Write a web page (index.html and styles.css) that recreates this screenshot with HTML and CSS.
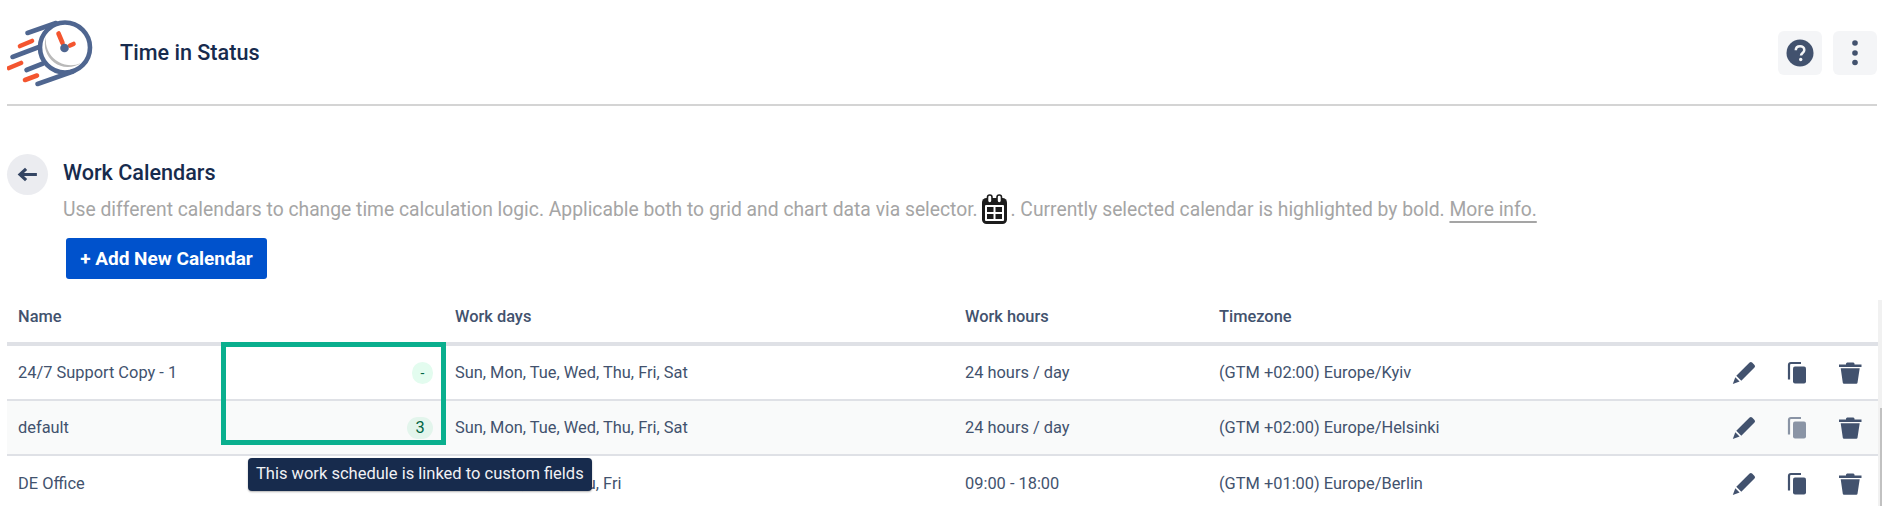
FILE: index.html
```html
<!DOCTYPE html>
<html lang="en">
<head>
<meta charset="utf-8">
<title>Time in Status</title>
<link rel="stylesheet" href="styles.css">
</head>
<body>
<header class="topbar">
  <div class="brand">
    <svg class="logo" viewBox="7 0 96 92" width="96" height="92">
      <g fill="none" stroke="#4f6690" stroke-width="4.600" stroke-linecap="round">
        <circle cx="65" cy="47.500" r="25"/>
        <path d="M27.500 33 L56 23"/>
        <path d="M12.500 57 L39 47"/>
        <path d="M26.500 70 L43 63.500"/>
        <path d="M37.500 84 L73 71.500"/>
      </g>
      <path d="M46 37 A23 23 0 0 0 81 63 A25 25 0 0 1 46 37Z" fill="#b9b9b9"/>
      <g fill="none" stroke="#f4552f" stroke-width="4.600" stroke-linecap="round">
        <path d="M20 46 L32 41"/>
        <path d="M9 68 L21 63"/>
        <path d="M25 80 L37 75.500"/>
        <path d="M58.500 33.500 L62.500 43"/>
        <path d="M70 45.500 L73.500 44"/>
      </g>
      <circle cx="64.500" cy="48" r="4.300" fill="#4f6690"/>
    </svg>
    <h1 class="app-title">Time in Status</h1>
  </div>
  <div class="top-actions">
    <button class="square-btn" aria-label="Help">
      <svg viewBox="0 0 28 28" width="28" height="28"><circle cx="14" cy="14" r="13.500" fill="#42526e"/><path d="M9.800 11.200c0-2.500 1.900-4 4.300-4s4.200 1.500 4.200 3.700c0 3-3.300 3-3.300 5.600" fill="none" stroke="#f4f5f7" stroke-width="2.500"/><circle cx="14.700" cy="20.500" r="1.700" fill="#f4f5f7"/></svg>
    </button>
    <button class="square-btn" aria-label="More">
      <svg viewBox="0 0 6 26" width="6" height="26"><circle cx="3" cy="3" r="2.800" fill="#42526e"/><circle cx="3" cy="13" r="2.800" fill="#42526e"/><circle cx="3" cy="22.500" r="2.800" fill="#42526e"/></svg>
    </button>
  </div>
</header>

<section class="intro">
  <button class="back" aria-label="Back">
    <svg viewBox="0 0 22 16" width="21" height="15"><path d="M21 8H3M9.500 2 3 8l6.500 6" fill="none" stroke="#344563" stroke-width="3.400"/></svg>
  </button>
  <div class="intro-text">
    <h2 class="page-title">Work Calendars</h2>
    <p class="desc">Use different calendars to change time calculation logic. Applicable both to grid and chart data via selector. <svg class="cal" viewBox="0 0 25 30" width="25" height="30"><rect y="4" width="25" height="26" rx="4.500" fill="#1c1c1c"/><rect x="3" y="11" width="19" height="16" rx="1" fill="#fff"/><path d="M5 13h6.500v5H5zM13.500 13H20v5h-6.500zM5 20h6.500v5H5zM13.500 20H20v5h-6.500z" fill="#1c1c1c"/><rect x="5.500" y="1" width="4.500" height="8" rx="2.200" fill="#fff" stroke="#1c1c1c" stroke-width="1.600"/><rect x="15" y="1" width="4.500" height="8" rx="2.200" fill="#fff" stroke="#1c1c1c" stroke-width="1.600"/></svg>. Currently selected calendar is highlighted by bold. <a class="more" href="#">More info.</a></p>
  </div>
</section>
<button class="add-btn">+ Add New Calendar</button>

<main class="table">
  <div class="row head">
    <div class="c-name">Name</div>
    <div class="c-link"></div>
    <div class="c-days">Work days</div>
    <div class="c-hours">Work hours</div>
    <div class="c-tz">Timezone</div>
    <div class="c-act"></div>
  </div>
  <div class="row">
    <div class="c-name">24/7 Support Copy - 1</div>
    <div class="c-link"><span class="pill">-</span></div>
    <div class="c-days">Sun, Mon, Tue, Wed, Thu, Fri, Sat</div>
    <div class="c-hours">24 hours / day</div>
    <div class="c-tz">(GTM +02:00) Europe/Kyiv</div>
    <div class="c-act">
      <svg class="ic" viewBox="0 0 24 24"><use href="#pen"/></svg>
      <svg class="ic" viewBox="0 0 24 24"><use href="#copy"/></svg>
      <svg class="ic" viewBox="0 0 24 24"><use href="#bin"/></svg>
    </div>
  </div>
  <div class="row alt">
    <div class="c-name">default</div>
    <div class="c-link"><span class="pill num">3</span></div>
    <div class="c-days">Sun, Mon, Tue, Wed, Thu, Fri, Sat</div>
    <div class="c-hours">24 hours / day</div>
    <div class="c-tz">(GTM +02:00) Europe/Helsinki</div>
    <div class="c-act">
      <svg class="ic" viewBox="0 0 24 24"><use href="#pen"/></svg>
      <svg class="ic dim" viewBox="0 0 24 24"><use href="#copy"/></svg>
      <svg class="ic" viewBox="0 0 24 24"><use href="#bin"/></svg>
    </div>
  </div>
  <div class="row last">
    <div class="c-name">DE Office</div>
    <div class="c-link"></div>
    <div class="c-days">Mon, Tue, Wed, Thu, Fri</div>
    <div class="c-hours">09:00 - 18:00</div>
    <div class="c-tz">(GTM +01:00) Europe/Berlin</div>
    <div class="c-act">
      <svg class="ic" viewBox="0 0 24 24"><use href="#pen"/></svg>
      <svg class="ic" viewBox="0 0 24 24"><use href="#copy"/></svg>
      <svg class="ic" viewBox="0 0 24 24"><use href="#bin"/></svg>
    </div>
  </div>
  <div class="highlight"></div>
  <div class="tooltip">This work schedule is linked to custom fields</div>
</main>
<div class="scroll-track"><div class="scroll-thumb"></div></div>

<svg class="defs" width="0" height="0" aria-hidden="true">
  <symbol id="pen" viewBox="0 0 24 24"><path d="M17.600 1.500a1.800 1.800 0 0 1 2.500 0l2.400 2.400a1.800 1.800 0 0 1 0 2.500L9.300 19.700l-5-5ZM3.300 16.300l4.300 4.300L.8 23Z" fill="#42526e"/></symbol>
  <symbol id="copy" viewBox="0 0 24 24"><path d="M4 18.500V4a2 2 0 0 1 2-2h10" fill="none" stroke="#42526e" stroke-width="2.200"/><rect x="8" y="5.500" width="13" height="17" rx="2" fill="#42526e"/></symbol>
  <symbol id="bin" viewBox="0 0 24 24"><path d="M1 3.500h22.500v2.500H1ZM8 2.400l1-1h6.500l1 1v1.200H8ZM2.700 7.200h19L19.500 21.800a1.200 1.200 0 0 1-1.200 1H6a1.200 1.200 0 0 1-1.200-1Z" fill="#42526e"/></symbol>
</svg>
</body>
</html>
```

FILE: styles.css
```css
* { box-sizing: border-box; }
html, body { margin: 0; height: 506px; overflow: hidden; background: #fff; }
body { font-family: Roboto, "Liberation Sans", sans-serif; color: #42526e; position: relative; }
button { border: 0; padding: 0; font-family: inherit; cursor: pointer; }

.topbar { margin: 0 5px 0 7px; height: 106px; border-bottom: 2px solid #d4d4d4; display: flex; justify-content: space-between; }
.brand { display: flex; align-items: flex-start; }
.logo { display: block; flex: none; }
.app-title { margin: 40px 0 0 17px; font-size: 21.6px; line-height: 26px; font-weight: 500; color: #172b4d; }
.top-actions { display: flex; gap: 11px; padding-top: 31px; }
.square-btn { width: 44px; height: 44px; border-radius: 6px; background: #f4f5f7; display: flex; align-items: center; justify-content: center; }

.intro { display: flex; margin: 48px 0 0 7px; }
.back { width: 41px; height: 41px; border-radius: 50%; background: #ebecf0; display: flex; align-items: center; justify-content: center; flex: none; }
.intro-text { margin-left: 15px; }
.page-title { margin: 7px 0 0; font-size: 21.6px; line-height: 24px; font-weight: 500; color: #172b4d; }
.desc { margin: 9px 0 0; font-size: 19.3px; line-height: 24px; height: 24px; color: #a5a5a5; white-space: nowrap; }
.cal { vertical-align: -8px; margin-right: 3px; }
.more { color: #a5a5a5; text-decoration: underline; text-decoration-thickness: 2px; text-underline-offset: 5px; }
.add-btn { display: block; margin: 20px 0 0 66px; width: 201px; height: 41px; border-radius: 3px; background: #0052cc; color: #fff; font-size: 19px; font-weight: 700; }

.table { position: relative; margin-left: 7px; width: 1871px; }
.row { display: grid; grid-template-columns: 215px 233px 510px 254px 1fr 180px; align-items: center; height: 55px; border-bottom: 2px solid #dfe1e6; font-size: 16.4px; line-height: 20px; }
.row > div:first-child { padding-left: 11px; }
.row.head { height: 67px; padding-top: 13px; border-bottom-width: 4px; font-weight: 500; }
.row.alt { background: #f9fafa; }
.row.last { border-bottom: 0; }
.c-link { display: flex; justify-content: flex-end; padding-right: 22px; }
.pill { min-width: 21px; height: 22px; padding: 0 6px; border-radius: 11px; background: #e3fcef; color: #006644; font-size: 14px; line-height: 22px; text-align: center; }
.pill.num { font-size: 16.4px; min-width: 26px; background: #e3f5ec; }
.c-act { display: flex; align-items: center; gap: 29px; padding-left: 34px; }
.ic { width: 24px; height: 24px; flex: none; }
.dim { opacity: .6; }
.highlight { position: absolute; left: 214px; top: 63px; width: 225px; height: 103px; border: 5px solid #0aaf8e; }
.tooltip { position: absolute; left: 241px; top: 179px; width: 344px; height: 33px; padding: 0 8px; border-radius: 4px; background: #172b4d; color: #f0f1f4; font-size: 16.5px; line-height: 31px; white-space: nowrap; box-shadow: 0 1px 2px rgba(0,0,0,.3); }
.scroll-track { position: absolute; right: 0; top: 300px; bottom: 0; width: 4px; background: #f1f1f1; }
.scroll-thumb { margin: 108px 0 0 2px; height: 98px; background: #c1c1c1; }
.defs { position: absolute; }
```
